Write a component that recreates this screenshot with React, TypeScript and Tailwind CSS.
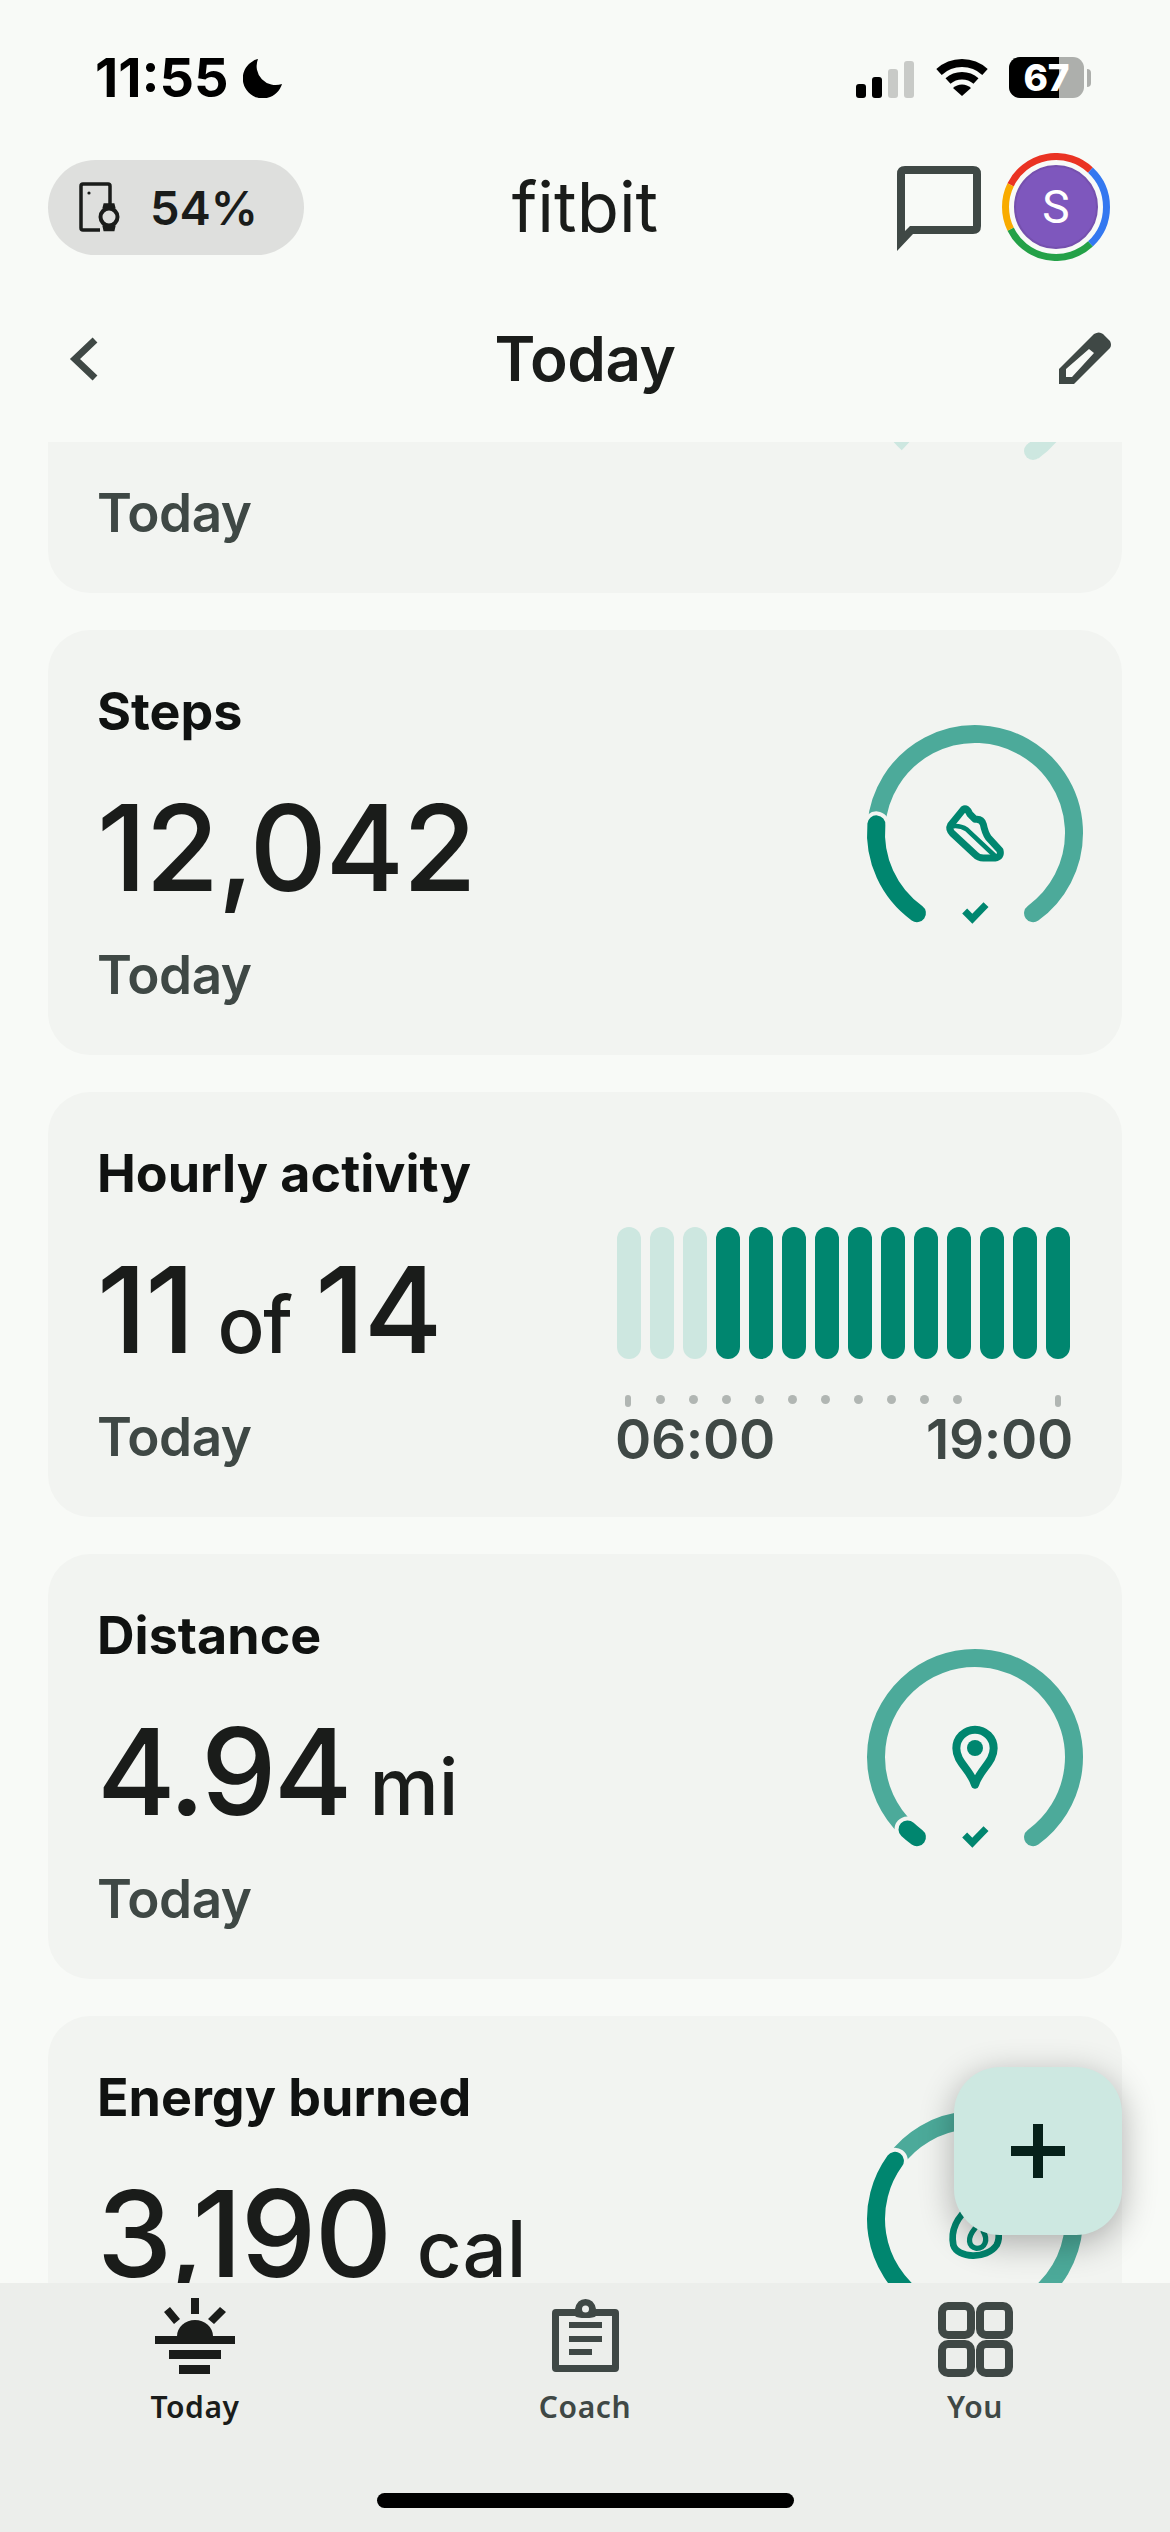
import React from 'react';

const DARK = '#00866f';
const LIGHT = '#4caa9a';
const PALE = '#cde7e0';
const CARD = '#f2f4f1';

// angle is clockwise from 12 o'clock, ring centre is (cx, cy)
function polar(cx: number, cy: number, r: number, deg: number) {
  const a = (deg * Math.PI) / 180;
  return [cx + r * Math.sin(a), cy - r * Math.cos(a)];
}

// arc drawn going clockwise from one angle to the other
function arc(cx: number, cy: number, r: number, from: number, to: number) {
  const [x1, y1] = polar(cx, cy, r, from);
  const [x2, y2] = polar(cx, cy, r, to);
  const sweep = ((to - from) % 360 + 360) % 360;
  return `M${x1} ${y1} A${r} ${r} 0 ${sweep > 180 ? 1 : 0} 1 ${x2} ${y2}`;
}

function Ring({ value, children, offset }: { value: number; children: React.ReactNode; offset: number }) {
  return (
    <svg width="216" height="216" viewBox="0 0 216 216" fill="none" className="block overflow-visible">
      <path d={arc(108, 108, 99, value, 144.1)} stroke={LIGHT} strokeWidth="18" strokeLinecap="round" />
      <path d={arc(108, 108, 99, 215.9, value)} stroke={CARD} strokeWidth="26" strokeLinecap="round" />
      <path d={arc(108, 108, 99, 215.9, value)} stroke={DARK} strokeWidth="18" strokeLinecap="round" />
      <g transform={`translate(-47 ${offset}) scale(${1 / 3})`}>
        {children}
        <path d="M434 690 L457 713 L498 671" stroke={DARK} strokeWidth="21" />
      </g>
    </svg>
  );
}

function Shoe() {
  return (
    <g stroke={DARK} strokeLinejoin="round" strokeLinecap="round">
      <path
        d="M430 385 L392 432 Q385 445 398 458 L465 520 Q475 531 490 531 L525 531 Q545 528 540 508 L505 470 Q495 455 490 430 Q485 412 465 415 L450 400 Q440 378 430 385 Z"
        strokeWidth="21"
      />
      <path d="M395 436 Q420 432 440 445 L525 525" strokeWidth="14" />
    </g>
  );
}

function Pin() {
  return (
    <g transform="translate(0 42)">
      <path
        d="M465 332 A56 56 0 0 1 521 388 C521 430 480 450 465 497 C450 450 409 430 409 388 A56 56 0 0 1 465 332 Z"
        stroke={DARK}
        strokeWidth="24"
        strokeLinejoin="round"
      />
      <circle cx="465" cy="387" r="24" fill={DARK} />
    </g>
  );
}

function Flame() {
  return (
    <g transform="translate(0 44)" stroke={DARK} strokeLinecap="round">
      <path d="M455 370 C405 410 392 450 400 490 C412 530 500 535 530 490 C545 460 530 430 520 410" strokeWidth="20" />
      <path d="M465 440 C440 470 445 495 470 500 C495 500 505 475 490 450" strokeWidth="16" />
    </g>
  );
}

function MetricCard({ title, value, unit, right }: { title: string; value: React.ReactNode; unit?: string; right: React.ReactNode }) {
  return (
    <div className="flex h-[425px] justify-between rounded-[42px] bg-[#f2f4f1] pl-[49px]">
      <div className="flex flex-col">
        <div className="mt-[52px] text-[52px] leading-[60px] font-bold text-[#101211]">{title}</div>
        <div className="mt-[46px] flex h-[120px] items-baseline text-[#1a1c1a]">
          <span className="text-[120px] leading-[120px] font-medium tracking-[-1.5px]">{value}</span>
          {unit && <span className="ml-[26px] text-[78px] leading-[120px] font-medium">{unit}</span>}
        </div>
        <div className="mt-[37px] text-[53px] leading-[60px] font-semibold tracking-[-0.5px] text-[#3f4845]">Today</div>
      </div>
      {right}
    </div>
  );
}

function HourlyChart() {
  const bars = Array.from({ length: 14 }, (_, i) => i);
  return (
    <div className="mt-[135px] mr-[52px] flex w-[453px] flex-col">
      <div className="flex gap-[9px]">
        {bars.map((b) => (
          <div key={b} className={`h-[132px] w-[24px] rounded-full ${b < 3 ? 'bg-[#cde7e0]' : 'bg-[#00866f]'}`} />
        ))}
      </div>
      <div className="mt-[36px] flex h-[12px] gap-[24px] pl-[9px]">
        {bars.slice(0, 11).map((b) =>
          b === 0 ? (
            <div key={b} className="mr-[1.5px] -ml-[1.5px] h-[12px] w-[6px] rounded-full bg-[#b1b6b3]" />
          ) : (
            <div key={b} className="h-[9px] w-[9px] rounded-full bg-[#b1b6b3]" />
          ),
        )}
        <div className="mr-[9px] ml-auto h-[12px] w-[6px] rounded-full bg-[#b1b6b3]" />
      </div>
      <div className="mt-[2px] -mr-[3px] -ml-[2px] flex justify-between text-[55px] leading-[60px] font-semibold tracking-[-0.3px] text-[#3f4845]">
        <span>06:00</span>
        <span>19:00</span>
      </div>
    </div>
  );
}

function StatusBar() {
  return (
    <div className="flex h-[120px] items-start justify-between pt-[50px] pr-[79px] pl-[95px]">
      <div className="flex items-center gap-[14px]">
        <span className="text-[54px] leading-[56px] font-bold text-black">11:55</span>
        <svg width="40" height="40" viewBox="0 0 40 40">
          <path d="M15 1 A20 20 0 1 0 39 26 A19 19 0 0 1 15 1 Z" fill="#000" />
        </svg>
      </div>
      <div className="flex items-center pt-[7px]">
        <svg width="60" height="38" viewBox="0 0 60 38" className="mt-[2px]">
          <rect x="0" y="24" width="10" height="14" rx="3" fill="#000" />
          <rect x="16" y="17" width="10" height="21" rx="3" fill="#000" />
          <rect x="32" y="9" width="10" height="29" rx="3" fill="#c8cac7" />
          <rect x="48" y="1" width="10" height="37" rx="3" fill="#c8cac7" />
        </svg>
        <svg width="52" height="38" viewBox="0 0 52 38" className="ml-[20px]" fill="none" stroke="#000">
          <path d="M3 13 A34 34 0 0 1 49 13" strokeWidth="8" />
          <path d="M12 22 A21 21 0 0 1 40 22" strokeWidth="7.5" />
          <path d="M26 37 L17 29 A13 13 0 0 1 35 29 Z" fill="#000" strokeWidth="0" />
        </svg>
        <div className="relative ml-[21px] flex h-[41px] w-[75px] items-center justify-center rounded-[11px] bg-[#adafac] text-[37px] font-extrabold text-white">
          <div className="absolute inset-y-0 left-0 w-[50px] rounded-l-[11px] bg-black" />
          <span className="relative leading-none">67</span>
        </div>
        <div className="ml-[3px] h-[18px] w-[4px] rounded-r-full bg-[#adafac]" />
      </div>
    </div>
  );
}

function GoogleAvatar() {
  return (
    <div className="relative flex h-[108px] w-[108px] items-center justify-center">
      <svg width="108" height="108" viewBox="0 0 108 108" fill="none" className="absolute inset-0">
        <path d={arc(54, 54, 50.5, 296, 43)} stroke="#ea3323" strokeWidth="7" />
        <path d={arc(54, 54, 50.5, 43, 137)} stroke="#3478f0" strokeWidth="7" />
        <path d={arc(54, 54, 50.5, 137, 244)} stroke="#24a148" strokeWidth="7" />
        <path d={arc(54, 54, 50.5, 244, 296)} stroke="#f9ab00" strokeWidth="7" />
      </svg>
      <div className="flex h-[84px] w-[84px] items-center justify-center rounded-full border-2 border-[#7550ae] bg-[#7e57bd] font-['Roboto',sans-serif] text-[46px] leading-none text-white">
        S
      </div>
    </div>
  );
}

function TopBar() {
  return (
    <div className="relative mt-[33px] flex h-[108px] items-center justify-between pr-[60px] pl-[48px]">
      <div className="flex h-[95px] w-[256px] items-center rounded-full bg-[#dedfdd] pl-[31px]">
        <svg width="42" height="50" viewBox="0 0 42 50" fill="none" stroke="#1a1c1a" strokeWidth="3.5">
          <path d="M21 48 H4 Q2 48 2 46 V4 Q2 2 4 2 H29 Q31 2 31 4 V22" />
          <circle cx="10" cy="11" r="1.6" fill="#1a1c1a" stroke="none" />
          <circle cx="30" cy="35" r="8.5" strokeWidth="4" />
          <path d="M25 27 L26 23 H34 L35 27 M25 43 L26 47.5 H34 L35 43" strokeWidth="3.5" fill="#1a1c1a" />
        </svg>
        <span className="ml-[29px] text-[47px] leading-none font-semibold text-[#1a1c1a]">54%</span>
      </div>
      <div className="pointer-events-none absolute right-0 left-0 text-center text-[69px] leading-none font-normal text-[#1a1c1a]">fitbit</div>
      <div className="flex items-center gap-[21px]">
        <svg width="84" height="85" viewBox="0 0 84 85" fill="none" className="mt-[2px]">
          <path d="M0 85 V8 Q0 0 8 0 H76 Q84 0 84 8 V60 Q84 68 76 68 H16 Z M8 65 L13 60 H76 V8 H8 Z" fill="#3f4845" fillRule="evenodd" />
        </svg>
        <GoogleAvatar />
      </div>
    </div>
  );
}

function SubHeader() {
  return (
    <div className="relative mt-[15px] flex h-[166px] shrink-0 items-center justify-between pr-[57px] pl-[69px]">
      <svg width="30" height="44" viewBox="0 0 30 44" fill="none">
        <path d="M26 3 L6 22 L26 41" stroke="#3f4845" strokeWidth="7" />
      </svg>
      <div className="absolute right-0 left-0 text-center text-[62px] leading-none font-semibold tracking-[-0.5px] text-[#1a1c1a]">Today</div>
      <svg width="54" height="54" viewBox="0 0 54 54" fill="none">
        <path
          d="M0 37 L35 2 Q40 -1 44 2 L51 9 Q53 13 51 16 L15 52 H0 Z M7 37 V45 H13 L35 21 L30 17 Z"
          fill="#3f4845"
          fillRule="evenodd"
        />
      </svg>
    </div>
  );
}

function NavItem({ label, active, children }: { label: string; active?: boolean; children: React.ReactNode }) {
  return (
    <div className="flex w-[390px] flex-col items-center pt-[15px]">
      <div className="flex h-[78px] items-start justify-center">{children}</div>
      <span className={`mt-[11px] font-['Noto_Sans',sans-serif] text-[30px] leading-[40px] font-semibold tracking-[0.6px] ${active ? 'text-[#1a1c1a]' : 'text-[#3f4845]'}`}>
        {label}
      </span>
    </div>
  );
}

function BottomNav() {
  return (
    <div className="relative flex h-[249px] shrink-0 justify-between bg-[#eceeeb]">
      <NavItem label="Today" active>
        <svg width="80" height="76" viewBox="0 0 80 76" fill="#1a1c1a">
          <rect x="36" y="0" width="8" height="16" />
          <path d="M9 14 L15 9 L25 21 L19 26 Z M71 14 L65 9 L53 21 L59 26 Z" />
          <path d="M22 38 A18 16 0 0 1 58 38 Z" />
          <rect x="0" y="38" width="80" height="8" />
          <rect x="14" y="52" width="52" height="9" />
          <rect x="24" y="67" width="31" height="9" />
        </svg>
      </NavItem>
      <NavItem label="Coach">
        <svg width="67" height="75" viewBox="0 0 67 75" fill="none">
          <path d="M4 11 H23 Q25 1 33.500 1 Q42 1 44 11 H63 Q67 11 67 15 V70 Q67 74 63 74 H4 Q0 74 0 70 V15 Q0 11 4 11 Z M7 18 V67 H60 V18 H44 Q42 20 33.500 20 Q25 20 23 18 Z" fill="#3f4845" fillRule="evenodd" />
          <circle cx="33.500" cy="11" r="3.500" fill="#eceeeb" />
          <rect x="17" y="24" width="33" height="6" fill="#3f4845" />
          <rect x="17" y="38" width="33" height="6" fill="#3f4845" />
          <rect x="17" y="51" width="23" height="6" fill="#3f4845" />
        </svg>
      </NavItem>
      <NavItem label="You">
        <svg width="75" height="75" viewBox="0 0 75 75" fill="none" stroke="#3f4845" strokeWidth="8" className="mt-[4px]">
          <rect x="4" y="4" width="29" height="29" rx="6" />
          <rect x="42" y="4" width="29" height="29" rx="6" />
          <rect x="4" y="42" width="29" height="29" rx="6" />
          <rect x="42" y="42" width="29" height="29" rx="6" />
        </svg>
      </NavItem>
      <div className="absolute bottom-[24px] left-[377px] h-[15px] w-[417px] rounded-full bg-black" />
    </div>
  );
}

export default function App() {
  return (
    <div className="relative flex h-[2532px] w-[1170px] flex-col overflow-hidden bg-[#f8faf7] font-['Inter',sans-serif]">
      <StatusBar />
      <TopBar />
      <SubHeader />
      <div className="min-h-0 flex-1 overflow-hidden px-[48px]">
        <div className="-mt-[274px] flex flex-col gap-[37px]">
          <div className="flex h-[425px] justify-between rounded-[42px] bg-[#f2f4f1] pl-[49px]">
            <div className="mt-[315px] text-[53px] leading-[60px] font-semibold tracking-[-0.5px] text-[#3f4845]">Today</div>
            <svg width="216" height="216" viewBox="0 0 216 216" fill="none" className="mt-[95px] mr-[39px] block">
              <path d={arc(108, 108, 99, 222.7, 144.1)} stroke={PALE} strokeWidth="18" />
              <circle cx="166" cy="188" r="9" fill={PALE} />
            </svg>
          </div>
          <MetricCard
            title="Steps"
            value="12,042"
            right={
              <div className="mt-[95px] mr-[39px]">
                <Ring value={275} offset={-44}>
                  <Shoe />
                </Ring>
              </div>
            }
          />
          <MetricCard
            title="Hourly activity"
            value={
              <>
                11<span className="mx-[24px] text-[78px]">of</span>14
              </>
            }
            right={<HourlyChart />}
          />
          <MetricCard
            title="Distance"
            value={<span className="-mr-[6px] inline-block tracking-[-3px]">4.94</span>}
            unit="mi"
            right={
              <div className="mt-[95px] mr-[39px]">
                <Ring value={223} offset={-44}>
                  <Pin />
                </Ring>
              </div>
            }
          />
          <MetricCard
            title="Energy burned"
            value="3,190"
            unit="cal"
            right={
              <div className="mt-[95px] mr-[39px]">
                <Ring value={306} offset={-44}>
                  <Flame />
                </Ring>
              </div>
            }
          />
        </div>
      </div>
      <BottomNav />
      <button
        type="button"
        className="absolute top-[2067px] left-[954px] flex h-[168px] w-[168px] items-center justify-center rounded-[46px] bg-[#cde8e1] shadow-[0_8px_34px_rgba(0,0,0,0.3)]"
      >
        <svg width="54" height="54" viewBox="0 0 54 54" fill="#06211a">
          <rect x="22" y="0" width="10" height="54" />
          <rect x="0" y="22" width="54" height="10" />
        </svg>
      </button>
    </div>
  );
}
